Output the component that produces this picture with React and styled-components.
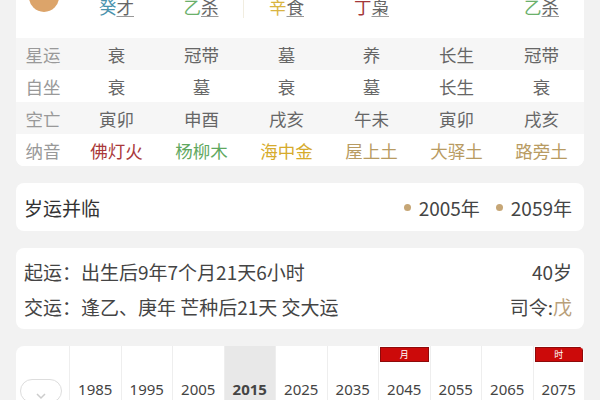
import styled, { createGlobalStyle } from 'styled-components';

const GlobalStyle = createGlobalStyle`
  html, body {
    margin: 0;
    padding: 0;
    background-color: #f2f2f2;
    overflow: hidden;
  }
  body {
    font-family: "Noto Sans CJK SC", "Noto Sans", sans-serif;
    color: #333;
  }
`;

const Page = styled.div`
  display: flex;
  flex-direction: column;
  gap: 17px;
  padding: 0 16px;
  margin-top: -13px;
`;

const Card = styled.div`
  background-color: white;
  border-radius: 8px;
  overflow: hidden;
`;

const Grid = styled.div`
  display: grid;
  grid-template-columns: 58px repeat(6, 1fr);
  align-items: center;
`;

const TopRow = styled(Grid)`
  height: 40px;
  margin-bottom: 11px;
`;

const Avatar = styled.div`
  width: 30px;
  height: 30px;
  border-radius: 50%;
  background-color: #dca46a;
  justify-self: center;
  margin-top: -21px;
  margin-left: -2px;
`;

const GanCell = styled.div`
  text-align: center;
  font-size: 17.5px;
  line-height: 22px;
  border-right: ${(p) => (p.$divider ? '1px solid #f1ede0' : 'none')};
`;

const Gan = styled.span`
  color: ${(p) => p.$color};
`;

const God = styled.span`
  color: #666;
  text-decoration: underline;
  text-decoration-color: #999;
  text-underline-offset: 2px;
`;

const TableRow = styled(Grid)`
  height: 32px;
  background-color: ${(p) => (p.$striped ? '#f6f6f6' : 'white')};
`;

const Label = styled.div`
  text-align: center;
  color: #999;
  font-size: 17.5px;
  padding-right: 4px;
`;

const Cell = styled.div`
  text-align: center;
  font-size: 17.5px;
  color: ${(p) => p.$color || '#666'};
`;

const InfoCard = styled(Card)`
  height: 48px;
  display: flex;
  align-items: center;
  justify-content: space-between;
  padding: 0 12px 0 8px;
  font-size: 19px;
  color: #333;
`;

const YearList = styled.div`
  display: flex;
  align-items: center;
  gap: 16px;
`;

const YearItem = styled.span`
  display: flex;
  align-items: center;
  gap: 8px;
  color: #444;
`;

const Dot = styled.span`
  width: 7px;
  height: 7px;
  border-radius: 50%;
  background-color: #c6a676;
`;

const StartCard = styled(Card)`
  display: flex;
  flex-direction: column;
  padding: 6px 12px 5px 8px;
`;

const StartRow = styled.div`
  height: 35px;
  display: flex;
  align-items: center;
  justify-content: space-between;
  font-size: 19px;
  color: #444;
`;

const Earth = styled.span`
  color: #b9a07a;
`;

const LuckCard = styled(Card)`
  display: grid;
  grid-template-columns: 53px repeat(10, 1fr);
  height: 70px;
`;

const ToggleCell = styled.div`
  display: flex;
  align-items: flex-start;
  justify-content: center;
  padding-top: 33px;
`;

const Toggle = styled.div`
  width: 42px;
  height: 24px;
  border: 1px solid #ddd;
  border-radius: 12px;
  display: flex;
  align-items: flex-end;
  justify-content: center;
  padding-bottom: 2px;
  box-sizing: border-box;
  margin-left: -4px;
`;

const YearCol = styled.div`
  border-left: 1px solid #eeeeee;
  background-color: ${(p) => (p.$active ? '#e8e8e8' : 'white')};
  display: flex;
  flex-direction: column;
  align-items: stretch;
`;

const TagSlot = styled.div`
  height: 16px;
  padding: 1px 1px 0;
`;

const Tag = styled.div`
  height: 15px;
  background-color: #cc0a0a;
  border: 1px solid #8e0a0a;
  box-sizing: border-box;
  color: white;
  font-size: 9px;
  line-height: 13px;
  text-align: center;
`;

const Year = styled.div`
  margin-top: 16px;
  text-align: center;
  font-size: 15px;
  font-family: "Noto Sans", "Noto Sans CJK SC", sans-serif;
  color: #444;
  font-weight: ${(p) => (p.$active ? 700 : 400)};
`;

const GAN_COLORS = {
  water: '#4a93ad',
  wood: '#6bb06b',
  metal: '#d9b441',
  fire: '#a3373a',
};

const topRow = [
  { gan: '癸', god: '才', c: GAN_COLORS.water },
  { gan: '乙', god: '杀', c: GAN_COLORS.wood, divider: true },
  { gan: '辛', god: '食', c: GAN_COLORS.metal },
  { gan: '丁', god: '枭', c: GAN_COLORS.fire },
  null,
  { gan: '乙', god: '杀', c: GAN_COLORS.wood },
];

const rows = [
  { label: '星运', cells: ['衰', '冠带', '墓', '养', '长生', '冠带'] },
  { label: '自坐', cells: ['衰', '墓', '衰', '墓', '长生', '衰'] },
  { label: '空亡', cells: ['寅卯', '申酉', '戌亥', '午未', '寅卯', '戌亥'] },
  {
    label: '纳音',
    cells: ['佛灯火', '杨柳木', '海中金', '屋上土', '大驿土', '路旁土'],
    colors: ['#a9383a', '#5fa85f', '#d6ab2c', '#b89b62', '#b89b62', '#b89b62'],
  },
];

const years = [
  { y: 1985 },
  { y: 1995 },
  { y: 2005 },
  { y: 2015, active: true },
  { y: 2025 },
  { y: 2035 },
  { y: 2045, tag: '月' },
  { y: 2055 },
  { y: 2065 },
  { y: 2075, tag: '时' },
];

const App = () => {
  return (
    <>
      <GlobalStyle />
      <Page>
        <Card>
          <TopRow>
            <Avatar />
            {topRow.map((item, i) => (
              <GanCell key={i} $divider={item && item.divider}>
                {item && (
                  <>
                    <Gan $color={item.c}>{item.gan}</Gan>
                    <God>{item.god}</God>
                  </>
                )}
              </GanCell>
            ))}
          </TopRow>
          {rows.map((row, i) => (
            <TableRow key={row.label} $striped={i % 2 === 0}>
              <Label>{row.label}</Label>
              {row.cells.map((c, j) => (
                <Cell key={j} $color={row.colors && row.colors[j]}>
                  {c}
                </Cell>
              ))}
            </TableRow>
          ))}
        </Card>

        <InfoCard>
          <span>岁运并临</span>
          <YearList>
            <YearItem>
              <Dot />
              2005年
            </YearItem>
            <YearItem>
              <Dot />
              2059年
            </YearItem>
          </YearList>
        </InfoCard>

        <StartCard>
          <StartRow>
            <span>起运：出生后9年7个月21天6小时</span>
            <span>40岁</span>
          </StartRow>
          <StartRow>
            <span>交运：逢乙、庚年 芒种后21天 交大运</span>
            <span>
              司令:<Earth>戊</Earth>
            </span>
          </StartRow>
        </StartCard>

        <LuckCard>
          <ToggleCell>
            <Toggle>
              <svg width="12" height="8" viewBox="0 0 12 8">
                <path d="M2 2 L6 6 L10 2" stroke="#ccc" strokeWidth="1.5" fill="none" />
              </svg>
            </Toggle>
          </ToggleCell>
          {years.map((item) => (
            <YearCol key={item.y} $active={item.active}>
              <TagSlot>{item.tag && <Tag>{item.tag}</Tag>}</TagSlot>
              <Year $active={item.active}>{item.y}</Year>
            </YearCol>
          ))}
        </LuckCard>
      </Page>
    </>
  );
};

export default App;
